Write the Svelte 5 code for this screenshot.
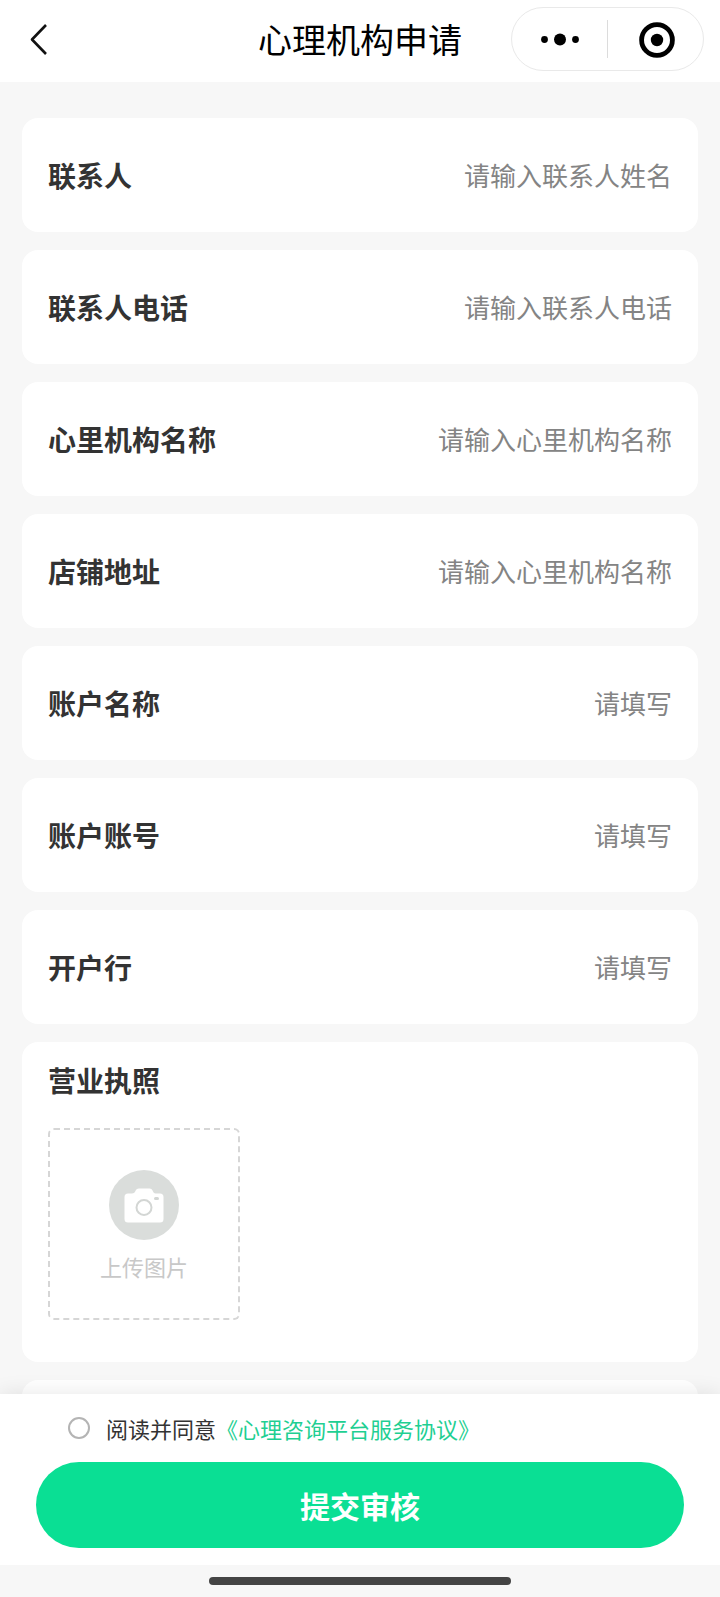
<script lang="ts">
  interface Field {
    id: string;
    label: string;
    placeholder: string;
    type?: string;
  }

  const fields: Field[] = [
    { id: 'contact', label: '联系人', placeholder: '请输入联系人姓名' },
    { id: 'phone', label: '联系人电话', placeholder: '请输入联系人电话', type: 'tel' },
    { id: 'orgName', label: '心里机构名称', placeholder: '请输入心里机构名称' },
    { id: 'address', label: '店铺地址', placeholder: '请输入心里机构名称' },
    { id: 'accountName', label: '账户名称', placeholder: '请填写' },
    { id: 'accountNo', label: '账户账号', placeholder: '请填写' },
    { id: 'bank', label: '开户行', placeholder: '请填写' }
  ];

  let form: Record<string, string> = $state({
    contact: '',
    phone: '',
    orgName: '',
    address: '',
    accountName: '',
    accountNo: '',
    bank: ''
  });
  let agreed = $state(false);

  function handleSubmit(event: Event): void {
    event.preventDefault();
    if (!agreed) return;
    console.log('submit', form);
  }
</script>

<form class="page" onsubmit={handleSubmit}>
  <header class="navbar">
    <button type="button" class="back" aria-label="返回">
      <svg width="20" height="32" viewBox="0 0 20 32" fill="none" stroke="#111" stroke-width="2.6" stroke-linejoin="round">
        <path d="M18 2 L4 16.5 L18 31" />
      </svg>
    </button>
    <h1>心理机构申请</h1>
    <div class="capsule">
      <button type="button" aria-label="更多">
        <svg width="40" height="14" viewBox="0 0 40 14" fill="#000">
          <circle cx="4.5" cy="7.5" r="3.4" />
          <circle cx="20" cy="7.5" r="6" />
          <circle cx="35.5" cy="7.5" r="3.4" />
        </svg>
      </button>
      <span class="divider"></span>
      <button type="button" aria-label="关闭">
        <svg width="38" height="38" viewBox="0 0 38 38">
          <circle cx="20" cy="20" r="15.4" fill="none" stroke="#000" stroke-width="4.8" />
          <circle cx="20" cy="20" r="6.2" fill="#000" />
        </svg>
      </button>
    </div>
  </header>

  <main class="content">
    {#each fields as field (field.id)}
      <div class="card field">
        <label for={field.id}>{field.label}</label>
        <input id={field.id} type={field.type ?? 'text'} placeholder={field.placeholder} bind:value={form[field.id]} />
      </div>
    {/each}

    <section class="card upload-card">
      <h2>营业执照</h2>
      <label class="upload">
        <input class="file" type="file" accept="image/*" />
        <svg width="70" height="70" viewBox="0 0 70 70">
          <circle cx="35" cy="35" r="35" fill="#dadddb" />
          <path
            fill="#fff"
            d="M19 23.5 H23 Q25.5 23.5 26.2 21.5 Q27.2 18.5 30 18.5 H40.5 Q43 18.5 44 21.5 Q44.7 23.5 46.5 23.5 H51 Q54.5 23.5 54.5 27 V49 Q54.5 52.5 51 52.5 H19 Q15.5 52.5 15.5 49 V27 Q15.5 23.5 19 23.5 Z"
          />
          <circle cx="35" cy="37.5" r="7.5" fill="none" stroke="#d3d6d4" stroke-width="2" />
          <rect x="45" y="27" width="5" height="3" rx="1.5" fill="#d3d6d4" />
        </svg>
        <span>上传图片</span>
      </label>
    </section>

    <section class="card upload-card"></section>
  </main>

  <footer class="footer">
    <div class="agreement">
      <input id="agree" type="checkbox" bind:checked={agreed} />
      <p><label for="agree">阅读并同意</label><a href="#agreement">《心理咨询平台服务协议》</a></p>
    </div>
    <button type="submit" class="submit">提交审核</button>
  </footer>

  <div class="home-bar"><span></span></div>
</form>

<style>
  :global(body) {
    margin: 0;
    background: #f7f7f7;
  }

  .page {
    display: flex;
    flex-direction: column;
    height: 100vh;
    background: #f7f7f7;
    color: #333;
    font-family: 'Noto Sans CJK SC', 'Noto Sans', sans-serif;
  }

  h1,
  h2,
  p {
    margin: 0;
  }

  button {
    padding: 0;
    border: none;
    background: none;
    font-family: inherit;
    cursor: pointer;
  }

  svg {
    display: block;
  }

  /* Top bar */
  .navbar {
    flex: none;
    display: grid;
    grid-template-columns: 1fr auto 1fr;
    align-items: center;
    box-sizing: border-box;
    height: 82px;
    padding: 0 16px 4px;
    background: #fff;
  }

  .navbar h1 {
    color: #000;
    font-size: 34px;
    line-height: 40px;
    font-weight: 400;
  }

  .back {
    justify-self: start;
    padding-left: 12px;
  }

  .capsule {
    justify-self: end;
    display: flex;
    align-items: center;
    box-sizing: border-box;
    width: 193px;
    height: 64px;
    border: 1px solid #e9e9e9;
    border-radius: 32px;
  }

  .capsule button {
    flex: 1;
    display: flex;
    justify-content: center;
  }

  .divider {
    width: 1px;
    height: 38px;
    background: #dcdcdc;
  }

  /* Form cards */
  .content {
    flex: 1;
    min-height: 0;
    display: flex;
    flex-direction: column;
    gap: 18px;
    padding: 36px 22px 0;
    overflow-y: auto;
    scrollbar-width: none;
  }

  .card {
    flex: none;
    box-sizing: border-box;
    padding: 0 26px;
    border-radius: 16px;
    background: #fff;
  }

  .field {
    display: flex;
    align-items: center;
    height: 114px;
  }

  .field label,
  .upload-card h2 {
    font-size: 28px;
    line-height: 40px;
    font-weight: 700;
  }

  .field input {
    flex: 1;
    min-width: 0;
    height: 40px;
    padding: 0 0 2px;
    border: none;
    outline: none;
    background: none;
    color: #333;
    font-family: inherit;
    font-size: 26px;
    text-align: right;
  }

  .field input::placeholder {
    color: #848484;
    opacity: 1;
  }

  .upload-card {
    min-height: 320px;
    padding-top: 18px;
    padding-bottom: 42px;
  }

  .upload {
    display: flex;
    flex-direction: column;
    align-items: center;
    justify-content: center;
    gap: 10px;
    box-sizing: border-box;
    width: 192px;
    height: 192px;
    margin-top: 28px;
    padding-top: 4px;
    border: 2px dashed #d6d6d6;
    border-radius: 6px;
    color: #c8c8c8;
    font-size: 22px;
    line-height: 32px;
    cursor: pointer;
  }

  .file {
    display: none;
  }

  /* Bottom bar */
  .footer {
    position: relative;
    flex: none;
    display: flex;
    flex-direction: column;
    gap: 18px;
    padding: 18px 36px 17px;
    background: #fff;
    box-shadow: 0 0 20px rgba(0, 0, 0, 0.1);
  }

  .agreement {
    display: flex;
    align-items: center;
    gap: 16px;
    padding-left: 32px;
    font-size: 22px;
    line-height: 32px;
  }

  .agreement input {
    appearance: none;
    box-sizing: border-box;
    width: 22px;
    height: 22px;
    margin: 0;
    border: 2px solid #b4b4b4;
    border-radius: 50%;
    background: #fff;
  }

  .agreement input:checked {
    border-color: #0adf94;
    background: #0adf94;
  }

  .agreement a {
    color: #1fcf92;
    text-decoration: none;
  }

  .submit {
    height: 86px;
    border-radius: 43px;
    background: #0adf94;
    color: #fff;
    font-size: 30px;
    font-weight: 700;
  }

  .home-bar {
    position: relative;
    flex: none;
    display: flex;
    align-items: center;
    justify-content: center;
    height: 32px;
    background: #f7f7f7;
  }

  .home-bar span {
    width: 42%;
    height: 8px;
    border-radius: 4px;
    background: #444;
  }
</style>
